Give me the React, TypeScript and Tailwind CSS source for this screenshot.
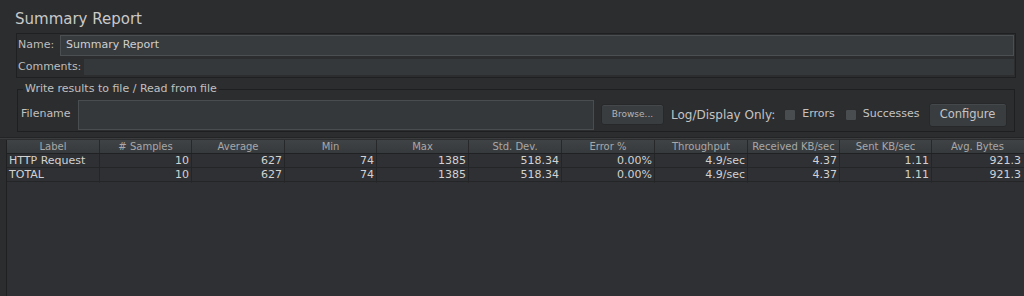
import React from "react";

const cols = [
  "Label",
  "# Samples",
  "Average",
  "Min",
  "Max",
  "Std. Dev.",
  "Error %",
  "Throughput",
  "Received KB/sec",
  "Sent KB/sec",
  "Avg. Bytes",
];

const rows = [
  ["HTTP Request", "10", "627", "74", "1385", "518.34", "0.00%", "4.9/sec", "4.37", "1.11", "921.3"],
  ["TOTAL", "10", "627", "74", "1385", "518.34", "0.00%", "4.9/sec", "4.37", "1.11", "921.3"],
];

const gridCols = "grid grid-cols-[92px_92px_93px_92px_92px_93px_93px_93px_92px_92px_92px]";

export default function App() {
  return (
    <div
      className="w-[1024px] h-[296px] overflow-hidden bg-[#2c2d2f] flex flex-col text-[#c4c4c4]"
      style={{ fontFamily: '"DejaVu Sans", "Liberation Sans", sans-serif' }}
    >
      {/* Title */}
      <div className="pl-[15px] pt-[9px] h-[33px] text-[15px] leading-[20px] text-[#c9c9c9]">
        Summary Report
      </div>

      {/* Name / Comments panel */}
      <div className="ml-[16px] w-[1000px] h-[45px] border border-[#1f2022] flex flex-col pr-[1px]">
        <div className="flex items-center h-[23px] pt-[1px]">
          <span className="pl-[1px] w-[43px] text-[11px] text-[#bdbdbd]">Name:</span>
          <div className="flex-1 h-[21px] bg-[#383b3d] border border-[#4c4f51] flex items-center pl-[5px] text-[11px] text-[#cfcfcf]">
            Summary Report
          </div>
        </div>
        <div className="flex items-center h-[20px] mt-[1px]">
          <span className="pl-[1px] w-[67px] text-[11px] text-[#bdbdbd]">Comments:</span>
          <div className="flex-1 h-[16px] bg-[#35383a]" />
        </div>
      </div>

      {/* Group box */}
      <div className="relative ml-[17px] w-[998px] h-[43px] mt-[11px] pt-[8px] border border-[#1e1f21] flex items-center">
        <span className="absolute left-[5px] top-[-9px] px-[2px] bg-[#2c2d2f] text-[11px] leading-[16px] text-[#c0c0c0]">
          Write results to file / Read from file
        </span>
        <span className="pl-[3px] w-[60px] text-[11px] text-[#c0c0c0]">Filename</span>
        <div className="w-[516px] h-[30px] bg-[#35383a] border border-[#4a4d4f]" />
        <button className="ml-[7px] w-[63px] h-[21px] rounded-[3px] bg-[#3a3d40] border border-[#26282a] text-[9px] text-[#b4b4b4] shadow-[inset_0_1px_0_#45484b]">
          Browse...
        </button>
        <span className="ml-[7px] text-[12px] text-[#c4c4c4]">Log/Display Only:</span>
        <span className="ml-[9px] w-[12px] h-[12px] bg-[#4a4d50] border border-[#2a2c2e] rounded-[2px]" />
        <span className="ml-[6px] text-[11px] text-[#c4c4c4]">Errors</span>
        <span className="ml-[10px] w-[12px] h-[12px] bg-[#4a4d50] border border-[#2a2c2e] rounded-[2px]" />
        <span className="ml-[6px] text-[11px] text-[#c4c4c4]">Successes</span>
        <button className="ml-[9px] w-[78px] h-[24px] rounded-[3px] bg-[#3a3d40] border border-[#26282a] text-[11.5px] text-[#c4c4c4] shadow-[inset_0_1px_0_#45484b]">
          Configure
        </button>
      </div>

      {/* separator */}
      <div className="mt-[5px] h-[1px] bg-[#232426]" />
      <div className="h-[1px] bg-[#3a3c3e]" />

      {/* Table area */}
      <div className="flex flex-1 mt-[1px]">
        <div className="w-[7px] border-r border-[#1f2022] bg-[#2c2d2f]" />
        <div className="flex-1 bg-[#2f3033] flex flex-col">
          <div className={`${gridCols} h-[14px] bg-gradient-to-b from-[#404346] to-[#373a3d] border-b border-[#1f2123]`}>
            {cols.map((c, i) => (
              <div
                key={c}
                className={`text-center text-[10px] leading-[13px] text-[#a8a8a8] ${i > 0 ? "border-l border-[#26282a]" : ""}`}
              >
                {c}
              </div>
            ))}
          </div>
          {rows.map((r, ri) => (
            <div key={ri} className={`${gridCols} h-[14px] border-b border-[#232527]`}>
              {r.map((v, i) => (
                <div
                  key={i}
                  className={`text-[11px] leading-[13px] text-[#d2d2d2] whitespace-nowrap ${
                    i === 0 ? "text-left pl-[2px]" : "text-right pr-[2px] border-l border-[#232527]"
                  }`}
                >
                  {v}
                </div>
              ))}
            </div>
          ))}
          <div className={`${gridCols} h-[1px]`}>
            {cols.map((c, i) => (
              <div key={c} className={i > 0 ? "border-l border-[#26282a]" : ""} />
            ))}
          </div>
        </div>
      </div>
    </div>
  );
}
